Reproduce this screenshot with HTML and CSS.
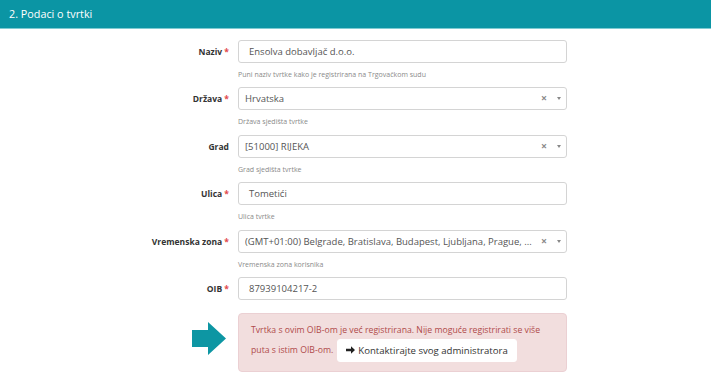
FILE: index.html
```html
<!DOCTYPE html>
<html lang="hr">
<head>
  <meta charset="UTF-8" />
  <title>Podaci o tvrtki</title>
  <link rel="stylesheet" href="styles.css">
</head>
<body>

<header class="naslov">2. Podaci o tvrtki</header>

<main class="forma">

  <!-- NAZIV -->
  <div class="red">
    <label class="oznaka">Naziv <span class="obavezno">*</span></label>
    <div class="polje">
      <div class="unos">Ensolva dobavljač d.o.o.</div>
      <div class="pomoc">Puni naziv tvrtke kako je registrirana na Trgovačkom sudu</div>
    </div>
  </div>

  <!-- DRŽAVA -->
  <div class="red">
    <label class="oznaka">Država <span class="obavezno">*</span></label>
    <div class="polje">
      <div class="unos izbor">
        <span class="vrijednost">Hrvatska</span>
        <span class="brisi">×</span>
        <span class="strelica"></span>
      </div>
      <div class="pomoc">Država sjedišta tvrtke</div>
    </div>
  </div>

  <!-- GRAD -->
  <div class="red">
    <label class="oznaka">Grad</label>
    <div class="polje">
      <div class="unos izbor">
        <span class="vrijednost">[51000] RIJEKA</span>
        <span class="brisi">×</span>
        <span class="strelica"></span>
      </div>
      <div class="pomoc">Grad sjedišta tvrtke</div>
    </div>
  </div>

  <!-- ULICA -->
  <div class="red">
    <label class="oznaka">Ulica <span class="obavezno">*</span></label>
    <div class="polje">
      <div class="unos">Tometići</div>
      <div class="pomoc">Ulica tvrtke</div>
    </div>
  </div>

  <!-- VREMENSKA ZONA -->
  <div class="red">
    <label class="oznaka">Vremenska zona <span class="obavezno">*</span></label>
    <div class="polje">
      <div class="unos izbor">
        <span class="vrijednost">(GMT+01:00) Belgrade, Bratislava, Budapest, Ljubljana, Prague, ...</span>
        <span class="brisi">×</span>
        <span class="strelica"></span>
      </div>
      <div class="pomoc">Vremenska zona korisnika</div>
    </div>
  </div>

  <!-- OIB -->
  <div class="red bez-pomoci">
    <label class="oznaka">OIB <span class="obavezno">*</span></label>
    <div class="polje">
      <div class="unos">87939104217-2</div>
    </div>
  </div>

  <!-- UPOZORENJE -->
  <div class="red">
    <div class="oznaka pokazivac">
      <svg width="34" height="33" viewBox="0 0 34 33">
        <polygon points="0,8 16,8 16,0 34,16.5 16,33 16,25 0,25" fill="#0d96a3"/>
      </svg>
    </div>
    <div class="upozorenje">
      <div class="redak">Tvrtka s ovim OIB-om je već registrirana. Nije moguće registrirati se više</div>
      <div class="redak drugi">
        puta s istim OIB-om.
        <button class="gumb">
          <svg width="9" height="8" viewBox="0 0 9 8">
            <path d="M0 2.8h5V0.3L9 4 5 7.7V5.2H0z" fill="#222"/>
          </svg>
          Kontaktirajte svog administratora
        </button>
      </div>
    </div>
  </div>

</main>

</body>
</html>
```

FILE: styles.css
```css
*, *::before, *::after { box-sizing: border-box; margin: 0; padding: 0; }

:root {
  --teal:      #0b95a4;
  --teal-line: #7fcbd2;
  --text:      #333333;
  --input:     #555555;
  --help:      #8a8a8a;
  --border:    #d4d4d4;
  --red:       #e2474b;

  --alert-bg:     #f2dede;
  --alert-border: #ebd0d3;
  --alert-text:   #b04a4a;
}

body {
  font-family: "Open Sans", "Noto Sans", Arial, sans-serif;
  background: #fff;
  color: var(--text);
  width: 711px;
  height: 379px;
  overflow: hidden;
}

.naslov {
  height: 29px;
  line-height: 28px;
  padding-left: 9px;
  background: var(--teal);
  border-bottom: 1px solid var(--teal-line);
  color: #fff;
  font-size: 10.8px;
}

.forma {
  padding-top: 11px;
}

/* ── RED FORME ─────────────────────────────────────────── */
.red {
  display: grid;
  grid-template-columns: 229px 329px;
  column-gap: 9px;
  margin-bottom: 6.4px;
}

.red.bez-pomoci { margin-bottom: 13px; }

.oznaka {
  height: 23px;
  line-height: 23px;
  text-align: right;
  font-size: 8.5px;
  font-weight: 700;
  color: var(--text);
  white-space: nowrap;
}

.obavezno { color: var(--red); }

.unos {
  height: 23px;
  border: 1px solid var(--border);
  border-radius: 3px;
  padding: 0 10px;
  line-height: 21px;
  font-size: 9.5px;
  color: var(--input);
  white-space: nowrap;
  overflow: hidden;
}

.unos.izbor {
  display: flex;
  align-items: center;
  padding: 0 5px 0 6px;
}

.izbor .vrijednost {
  flex: 1;
  overflow: hidden;
}

.izbor .brisi {
  font-size: 10.5px;
  font-weight: 700;
  color: #8a8a8a;
  margin-left: 4px;
}

.izbor .strelica {
  width: 0;
  height: 0;
  margin-left: 10px;
  border-left: 2.5px solid transparent;
  border-right: 2.5px solid transparent;
  border-top: 3px solid #888;
}

.pomoc {
  margin-top: 6px;
  line-height: 12px;
  font-size: 7px;
  color: var(--help);
  white-space: nowrap;
}

/* ── UPOZORENJE ────────────────────────────────────────── */
.pokazivac {
  height: auto;
  padding-top: 9px;
  padding-right: 3px;
  line-height: 0;
}

.upozorenje {
  height: 59px;
  padding: 7px 12px 0;
  background: var(--alert-bg);
  border: 1px solid var(--alert-border);
  border-radius: 4px;
  color: var(--alert-text);
  font-size: 8.7px;
}

.redak {
  line-height: 18px;
  white-space: nowrap;
}

.redak.drugi {
  display: flex;
  align-items: center;
  gap: 4px;
  height: 23px;
}

.gumb {
  display: inline-flex;
  align-items: center;
  gap: 3px;
  height: 23px;
  padding: 0 8px;
  background: #fff;
  border: 1px solid #fff;
  border-radius: 3px;
  font-family: inherit;
  font-size: 9.6px;
  color: var(--text);
}
```
